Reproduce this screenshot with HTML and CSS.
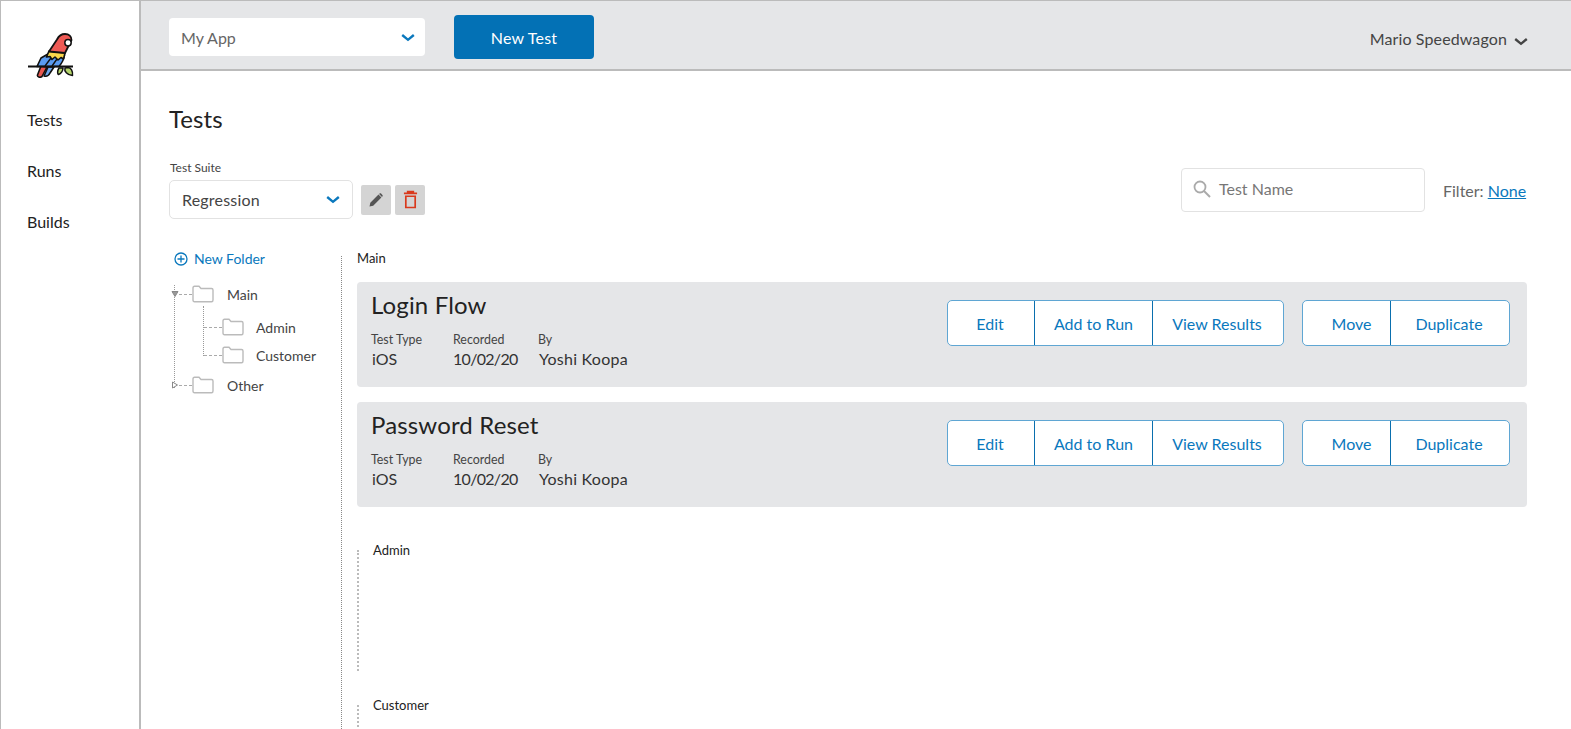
FILE: index.html
```html
<!DOCTYPE html>
<html lang="en">
<head>
  <meta charset="UTF-8" />
  <title>Tests</title>
  <link rel="stylesheet" href="styles.css">
</head>
<body>
  <div class="app">
    <nav class="sidebar">
      <svg class="logo" viewBox="0 0 46 45" width="46" height="45">
        <path d="M13 33 L9.5 42 C9 44 12 45 14 43.5 L19 34 Z" fill="#e8574f" stroke="#111" stroke-width="1.6" stroke-linejoin="round"/>
        <path d="M20 34 L16 43 C19 44 21 42 22 40 L26 34 Z" fill="#6fa8f0" stroke="#111" stroke-width="1.6" stroke-linejoin="round"/>
        <path d="M20 21 L13 25 L9 33.5 L31 33.5 C34 30 36 26 36.5 22 Z" fill="#5a9bf0" stroke="#111" stroke-width="1.6" stroke-linejoin="round"/>
        <path d="M17 33 L23 25 M24 33 L29 26" stroke="#111" stroke-width="1.4" fill="none"/>
        <path d="M21 18 L18.5 24 L22 23.5 L24 26.5 L27 24 L30 27 L33 24.5 L35.5 26 L37 20 Z" fill="#fbd84b" stroke="#111" stroke-width="1.6" stroke-linejoin="round"/>
        <path d="M21 18.5 L29 6.5 C31 2.5 34 1 37 1 C41 1 43.5 3.5 43.5 7 L41 12 L37 20 Z" fill="#ee5a55" stroke="#111" stroke-width="1.8" stroke-linejoin="round"/>
        <circle cx="40" cy="9.8" r="3.2" fill="#fff" stroke="#111" stroke-width="1.5"/>
        <path d="M31 35 C29 38 29.5 41 30.5 41.5 C33 41 35 38 35 35 Z M37 35 C36 38 39 42 44.5 42.5 C45 38 43 34.5 40 34.5 Z" fill="#b4d46a" stroke="#111" stroke-width="1.5" stroke-linejoin="round"/>
        <path d="M0 33.5 H45" stroke="#111" stroke-width="1.8"/>
      </svg>
      <a class="nav-link">Tests</a>
      <a class="nav-link">Runs</a>
      <a class="nav-link">Builds</a>
    </nav>

    <div class="main">
      <header class="topbar">
        <div class="app-select">
          <span>My App</span>
          <svg class="chevron" viewBox="0 0 14 9" width="14" height="9"><path d="M1.2 2 L7 6.8 L12.8 2" /></svg>
        </div>
        <button class="new-test">New Test</button>
        <div class="user">
          <span>Mario Speedwagon</span>
          <svg class="chevron dark" viewBox="0 0 14 9" width="14" height="9"><path d="M1.2 2 L7 6.8 L12.8 2" /></svg>
        </div>
      </header>

      <div class="content">
        <h1>Tests</h1>

        <div class="toolbar">
          <div class="suite">
            <label>Test Suite</label>
            <div class="suite-row">
              <div class="suite-select">
                <span>Regression</span>
                <svg class="chevron" viewBox="0 0 14 9" width="14" height="9"><path d="M1.2 2 L7 6.8 L12.8 2" /></svg>
              </div>
              <button class="icon-btn">
                <svg viewBox="0 0 16 16" width="16" height="16"><path d="M1.5 14.5 L2.3 10.8 L10.5 2.6 L13.4 5.5 L5.2 13.7 Z M11.4 1.7 C12 1.1 12.6 1.1 13.1 1.6 L14.4 2.9 C14.9 3.4 14.9 4 14.3 4.6 L14 4.9 L11.1 2 Z" fill="#555"/></svg>
              </button>
              <button class="icon-btn">
                <svg viewBox="0 0 16 20" width="15" height="19"><path d="M1 3.5 H15 M5 3.5 V1.5 H11 V3.5 M3 6.5 V18.5 H13 V6.5 Z" fill="none" stroke="#d9391c" stroke-width="1.8"/></svg>
              </button>
            </div>
          </div>
          <div class="search-box">
            <svg viewBox="0 0 18 18" width="18" height="18"><circle cx="7" cy="7" r="5.5" fill="none" stroke="#aaa" stroke-width="1.8"/><path d="M11 11 L17 17" stroke="#aaa" stroke-width="2"/></svg>
            <span>Test Name</span>
          </div>
          <div class="filter">Filter: <a>None</a></div>
        </div>

        <div class="columns">
          <aside class="tree">
            <a class="new-folder">
              <svg viewBox="0 0 14 14" width="14" height="14"><circle cx="7" cy="7" r="6" fill="none" stroke="#0a78bd" stroke-width="1.3"/><path d="M7 3.5 V10.5 M3.5 7 H10.5" stroke="#0a78bd" stroke-width="1.3"/></svg>
              New Folder
            </a>
            <div class="tree-list">
              <div class="tree-row">
                <svg class="toggle" viewBox="0 0 8 8" width="8" height="8"><path d="M1 1.5 H7 L4 6.5 Z" fill="#999" stroke="#888"/></svg>
                <span class="dash"></span>
                <svg class="folder" viewBox="0 0 22 18" width="22" height="18"><path d="M1 15 V3 C1 2 1.6 1.2 2.5 1.2 H7 L9 3.5 H19.5 C20.4 3.5 21 4.1 21 5 V15 C21 16 20.4 16.8 19.5 16.8 H2.5 C1.6 16.8 1 16 1 15 Z" fill="#fff" stroke="#bbb" stroke-width="1.4"/></svg>
                <span class="tree-label">Main</span>
              </div>
              <div class="tree-children">
                <div class="tree-row child">
                  <span class="dash"></span>
                  <svg class="folder" viewBox="0 0 22 18" width="22" height="18"><path d="M1 15 V3 C1 2 1.6 1.2 2.5 1.2 H7 L9 3.5 H19.5 C20.4 3.5 21 4.1 21 5 V15 C21 16 20.4 16.8 19.5 16.8 H2.5 C1.6 16.8 1 16 1 15 Z" fill="#fff" stroke="#bbb" stroke-width="1.4"/></svg>
                  <span class="tree-label">Admin</span>
                </div>
                <div class="tree-row child">
                  <span class="dash"></span>
                  <svg class="folder" viewBox="0 0 22 18" width="22" height="18"><path d="M1 15 V3 C1 2 1.6 1.2 2.5 1.2 H7 L9 3.5 H19.5 C20.4 3.5 21 4.1 21 5 V15 C21 16 20.4 16.8 19.5 16.8 H2.5 C1.6 16.8 1 16 1 15 Z" fill="#fff" stroke="#bbb" stroke-width="1.4"/></svg>
                  <span class="tree-label">Customer</span>
                </div>
              </div>
              <div class="tree-row other">
                <svg class="toggle" viewBox="0 0 8 8" width="8" height="8"><path d="M1.5 1 V7 L6.5 4 Z" fill="#fff" stroke="#888"/></svg>
                <span class="dash"></span>
                <svg class="folder" viewBox="0 0 22 18" width="22" height="18"><path d="M1 15 V3 C1 2 1.6 1.2 2.5 1.2 H7 L9 3.5 H19.5 C20.4 3.5 21 4.1 21 5 V15 C21 16 20.4 16.8 19.5 16.8 H2.5 C1.6 16.8 1 16 1 15 Z" fill="#fff" stroke="#bbb" stroke-width="1.4"/></svg>
                <span class="tree-label">Other</span>
              </div>
            </div>
          </aside>

          <section class="tests">
            <div class="folder-title">Main</div>

            <article class="card">
              <div class="card-info">
                <h2>Login Flow</h2>
                <div class="meta">
                  <div class="meta-col type"><small>Test Type</small><span>iOS</span></div>
                  <div class="meta-col date"><small>Recorded</small><span>10/02/20</span></div>
                  <div class="meta-col by"><small>By</small><span>Yoshi Koopa</span></div>
                </div>
              </div>
              <div class="btn-group">
                <button class="w-edit">Edit</button><button class="w-add">Add to Run</button><button class="w-view">View Results</button>
              </div>
              <div class="btn-group">
                <button class="w-move">Move</button><button class="w-dup">Duplicate</button>
              </div>
            </article>

            <article class="card">
              <div class="card-info">
                <h2>Password Reset</h2>
                <div class="meta">
                  <div class="meta-col type"><small>Test Type</small><span>iOS</span></div>
                  <div class="meta-col date"><small>Recorded</small><span>10/02/20</span></div>
                  <div class="meta-col by"><small>By</small><span>Yoshi Koopa</span></div>
                </div>
              </div>
              <div class="btn-group">
                <button class="w-edit">Edit</button><button class="w-add">Add to Run</button><button class="w-view">View Results</button>
              </div>
              <div class="btn-group">
                <button class="w-move">Move</button><button class="w-dup">Duplicate</button>
              </div>
            </article>

            <div class="subfolder admin"><span>Admin</span></div>
            <div class="subfolder customer"><span>Customer</span></div>
          </section>
        </div>
      </div>
    </div>
  </div>
</body>
</html>
```

FILE: styles.css
```css
* {
  box-sizing: border-box;
}
html,
body {
  margin: 0;
  height: 729px;
  overflow: hidden;
}
body {
  font-family: "Lato", sans-serif;
  font-size: 16px;
  color: #222;
  background: #fff;
}
button {
  font-family: inherit;
  cursor: pointer;
}
.app {
  display: flex;
  height: 729px;
}

/* sidebar */
.sidebar {
  width: 141px;
  flex-shrink: 0;
  border-left: 1px solid #bbb;
  border-top: 1px solid #bbb;
  border-right: 2px solid #bbb;
  padding: 32px 0 0 26px;
  display: flex;
  flex-direction: column;
}
.logo {
  margin: 0 0 32px 1px;
  display: block;
}
.nav-link {
  font-size: 16px;
  line-height: 20px;
  margin-bottom: 31px;
  color: #222;
}

/* top bar */
.main {
  flex: 1;
  display: flex;
  flex-direction: column;
  min-width: 0;
}
.topbar {
  height: 71px;
  flex-shrink: 0;
  background: #e5e6e8;
  border-top: 1px solid #bbb;
  border-bottom: 2px solid #bbb;
  display: flex;
  align-items: center;
  padding: 3px 43px 0 28px;
}
.app-select {
  width: 256px;
  height: 38px;
  background: #fff;
  border-radius: 4px;
  display: flex;
  align-items: center;
  justify-content: space-between;
  padding: 2px 10px 0 12px;
  color: #666;
}
.chevron path {
  fill: none;
  stroke: #0a78bd;
  stroke-width: 2.4;
}
.chevron.dark path {
  stroke: #444;
}
.new-test {
  width: 140px;
  height: 44px;
  margin-left: 29px;
  padding: 2px 0 0;
  background: #0371b5;
  border: none;
  border-radius: 4px;
  color: #fff;
  font-size: 16px;
  letter-spacing: 0.2px;
}
.user {
  margin: 4px 0 0 auto;
  display: flex;
  align-items: center;
  gap: 7px;
  color: #444;
  letter-spacing: 0.12px;
}
.user svg {
  margin-top: 5px;
}

/* content */
.content {
  flex: 1;
  padding: 34px 44px 0 28px;
  display: flex;
  flex-direction: column;
  min-height: 0;
}
h1 {
  margin: 0;
  font-size: 24px;
  font-weight: 400;
  line-height: 28px;
  letter-spacing: 0.1px;
  color: #222;
}
.toolbar {
  display: flex;
  align-items: flex-end;
  margin-top: 28px;
}
.suite label {
  display: block;
  font-size: 12px;
  line-height: 14px;
  color: #444;
  margin: 0 0 5px 1px;
}
.suite-row {
  display: flex;
  align-items: center;
  gap: 4px;
}
.suite-select {
  width: 184px;
  height: 39px;
  border: 1px solid #e2e2e2;
  border-radius: 5px;
  display: flex;
  align-items: center;
  justify-content: space-between;
  padding: 0 12px;
  margin-right: 4px;
  color: #444;
  letter-spacing: 0.2px;
}
.icon-btn {
  width: 30px;
  height: 30px;
  padding: 0;
  background: #d4d4d4;
  border: none;
  border-radius: 2px;
  display: flex;
  align-items: center;
  justify-content: center;
}
.search-box {
  margin-left: auto;
  width: 244px;
  height: 44px;
  margin-bottom: 7px;
  border: 1px solid #e2e2e2;
  border-radius: 4px;
  display: flex;
  align-items: center;
  gap: 8px;
  padding: 0 0 3px 11px;
  color: #777;
}
.filter {
  margin-left: 18px;
  margin-bottom: 19px;
  color: #666;
  width: 84px;
  white-space: nowrap;
}
.filter a {
  color: #0a78bd;
  text-decoration: underline;
}

.columns {
  display: flex;
  flex: 1;
  margin-top: 30px;
  min-height: 0;
}

/* folder tree */
.tree {
  width: 172px;
  flex-shrink: 0;
  padding: 0 0 0 5px;
}
.new-folder {
  display: flex;
  align-items: center;
  gap: 6px;
  font-size: 14px;
  line-height: 20px;
  color: #0a78bd;
}
.tree-list {
  margin-top: 16px;
  border-left: 1px dotted #999;
  width: 150px;
  height: 103px;
}
.tree-row {
  display: flex;
  align-items: center;
  height: 18px;
  font-size: 14px;
  color: #444;
}
.tree-list > .tree-row:first-child {
  margin-top: 12px;
}
.toggle {
  margin-left: -4px;
  flex-shrink: 0;
}
.dash {
  width: 13px;
  border-top: 1px dashed #aaa;
  flex-shrink: 0;
}
.folder {
  flex-shrink: 0;
}
.tree-label {
  margin-left: 13px;
  white-space: nowrap;
}
.tree-children {
  margin: 3px 0 0 28px;
  border-left: 1px dotted #999;
  padding-top: 12px;
  height: 50px;
}
.tree-row.child {
  margin-bottom: 10px;
}
.tree-row.child .dash {
  width: 18px;
}
.tree-row.child .tree-label {
  margin-left: 12px;
}
.tree-row.other {
  margin-top: 20px;
}

/* tests list */
.tests {
  flex: 1;
  margin-top: 7px;
  border-left: 1px dotted #888;
  padding-left: 15px;
  min-width: 0;
}
.folder-title {
  font-size: 13px;
  line-height: 16px;
  margin: -6px 0 16px;
}
.card {
  height: 105px;
  margin-bottom: 15px;
  background: #e5e6e8;
  border-radius: 4px;
  display: flex;
  align-items: flex-start;
  padding: 18px 17px 0 14px;
}
.card-info {
  margin-right: auto;
  margin-top: -10px;
}
h2 {
  margin: 0;
  font-size: 24px;
  font-weight: 400;
  line-height: 30px;
  letter-spacing: 0.15px;
  color: #222;
}
.meta {
  display: flex;
  margin-top: 12px;
}
.meta-col {
  display: flex;
  flex-direction: column;
}
.meta-col.type {
  width: 82px;
}
.meta-col.type span {
  margin-left: 1px;
}
.meta-col.date {
  width: 85px;
}
.meta-col.date span {
  letter-spacing: -0.7px;
}
.meta-col.by span {
  margin-left: 1px;
  letter-spacing: 0.25px;
}
.meta-col small {
  font-size: 12.4px;
  line-height: 15px;
  color: #444;
}
.meta-col span {
  font-size: 16px;
  line-height: 22px;
  margin-top: 1px;
  color: #333;
}
.btn-group {
  display: flex;
  height: 46px;
  background: #fff;
  border: 1px solid #5fa6d3;
  border-radius: 5px;
  margin-left: 18px;
}
.btn-group button {
  background: none;
  border: none;
  border-left: 1px solid #0a6fae;
  padding: 0;
  color: #0a78bd;
  font-size: 16px;
}
.btn-group button:first-child {
  border-left: none;
}
.btn-group .w-edit { width: 86px; padding-right: 2px; }
.btn-group .w-add { width: 118px; }
.btn-group .w-view { width: 131px; padding-right: 2px; }
.btn-group .w-move { width: 87px; padding-left: 10px; }
.btn-group .w-dup { width: 119px; padding-right: 2px; }

.subfolder {
  display: flow-root;
  font-size: 13px;
  line-height: 16px;
  padding-left: 14px;
  border-left: 2px dotted #bbb;
}
.subfolder span {
  display: block;
  margin-top: -8px;
}
.subfolder.admin {
  height: 121px;
  margin-top: 43px;
}
.subfolder.customer {
  height: 26px;
  margin-top: 34px;
}
```
